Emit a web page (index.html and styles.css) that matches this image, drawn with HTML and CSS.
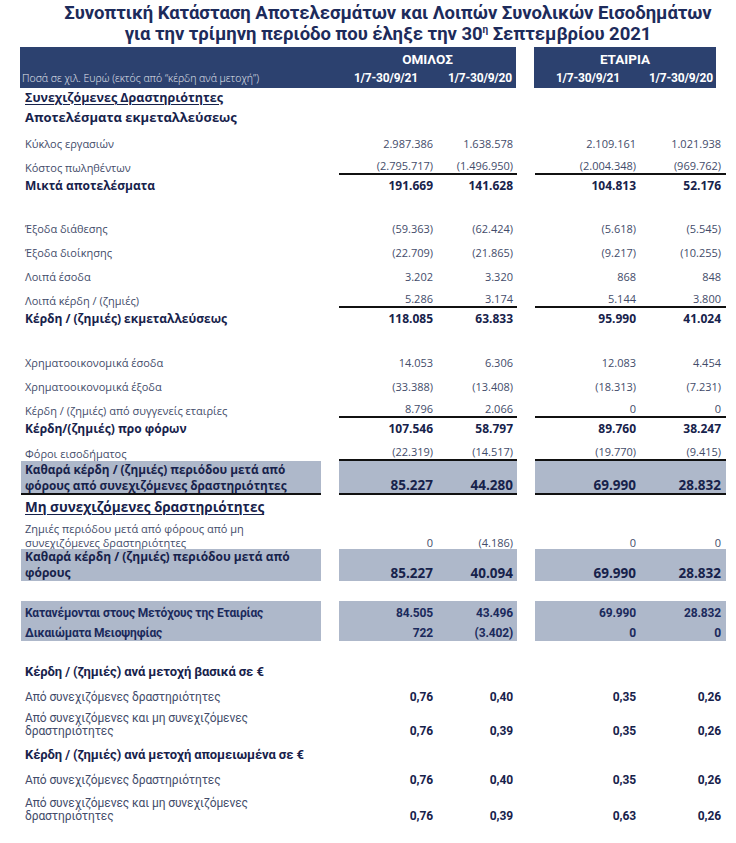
FILE: index.html
```html
<!DOCTYPE html>
<html lang="el">
<head>
<meta charset="utf-8">
<title>Συνοπτική Κατάσταση Αποτελεσμάτων</title>
<link rel="stylesheet" href="styles.css">
</head>
<body>
<div class="page">
  <h1 class="title">Συνοπτική Κατάσταση Αποτελεσμάτων και Λοιπών Συνολικών Εισοδημάτων<br>για την τρίμηνη περιόδο που έληξε την 30<sup>η</sup> Σεπτεμβρίου 2021</h1>

  <div class="head">
    <div class="head-left">
      <div class="grp-name">ΟΜΙΛΟΣ</div>
      <div class="unit">Ποσά σε χιλ. Ευρώ (εκτός από “κέρδη ανά μετοχή”)</div>
      <div class="date d1">1/7-30/9/21</div>
      <div class="date d2">1/7-30/9/20</div>
    </div>
    <div class="head-right">
      <div class="grp-name">ΕΤΑΙΡΙΑ</div>
      <div class="date d1">1/7-30/9/21</div>
      <div class="date d2">1/7-30/9/20</div>
    </div>
  </div>

  <div class="row sec"><div class="lbl"><span class="ul">Συνεχιζόμενες Δραστηριότητες</span></div></div>
  <div class="row sub"><div class="lbl">Αποτελέσματα εκμεταλλεύσεως</div></div>

  <div class="row item"><div class="lbl">Κύκλος εργασιών</div><div class="blk g"><span>2.987.386</span><span>1.638.578</span></div><div class="blk c"><span>2.109.161</span><span>1.021.938</span></div></div>
  <div class="row item line"><div class="lbl">Κόστος πωληθέντων</div><div class="blk g"><span>(2.795.717)</span><span>(1.496.950)</span></div><div class="blk c"><span>(2.004.348)</span><span>(969.762)</span></div></div>
  <div class="row total"><div class="lbl">Μικτά αποτελέσματα</div><div class="blk g"><span>191.669</span><span>141.628</span></div><div class="blk c"><span>104.813</span><span>52.176</span></div></div>

  <div class="spacer s16"></div>
  <div class="row item"><div class="lbl">Έξοδα διάθεσης</div><div class="blk g"><span>(59.363)</span><span>(62.424)</span></div><div class="blk c"><span>(5.618)</span><span>(5.545)</span></div></div>
  <div class="row item"><div class="lbl">Έξοδα διοίκησης</div><div class="blk g"><span>(22.709)</span><span>(21.865)</span></div><div class="blk c"><span>(9.217)</span><span>(10.255)</span></div></div>
  <div class="row item"><div class="lbl">Λοιπά έσοδα</div><div class="blk g"><span>3.202</span><span>3.320</span></div><div class="blk c"><span>868</span><span>848</span></div></div>
  <div class="row item line"><div class="lbl">Λοιπά κέρδη / (ζημιές)</div><div class="blk g"><span>5.286</span><span>3.174</span></div><div class="blk c"><span>5.144</span><span>3.800</span></div></div>
  <div class="row total"><div class="lbl">Κέρδη / (ζημιές) εκμεταλλεύσεως</div><div class="blk g"><span>118.085</span><span>63.833</span></div><div class="blk c"><span>95.990</span><span>41.024</span></div></div>

  <div class="spacer s17"></div>
  <div class="row item"><div class="lbl">Χρηματοοικονομικά έσοδα</div><div class="blk g"><span>14.053</span><span>6.306</span></div><div class="blk c"><span>12.083</span><span>4.454</span></div></div>
  <div class="row item"><div class="lbl">Χρηματοοικονομικά έξοδα</div><div class="blk g"><span>(33.388)</span><span>(13.408)</span></div><div class="blk c"><span>(18.313)</span><span>(7.231)</span></div></div>
  <div class="row item line"><div class="lbl">Κέρδη / (ζημιές) από συγγενείς εταιρίες</div><div class="blk g"><span>8.796</span><span>2.066</span></div><div class="blk c"><span>0</span><span>0</span></div></div>
  <div class="row total"><div class="lbl">Κέρδη/(ζημιές) προ φόρων</div><div class="blk g"><span>107.546</span><span>58.797</span></div><div class="blk c"><span>89.760</span><span>38.247</span></div></div>
  <div class="row item short line"><div class="lbl">Φόροι εισοδήματος</div><div class="blk g"><span>(22.319)</span><span>(14.517)</span></div><div class="blk c"><span>(19.770)</span><span>(9.415)</span></div></div>
  <div class="row shade boxed"><div class="lbl">Καθαρά κέρδη / (ζημιές) περιόδου μετά από<br>φόρους από συνεχιζόμενες δραστηριότητες</div><div class="blk g"><span>85.227</span><span>44.280</span></div><div class="blk c"><span>69.990</span><span>28.832</span></div></div>

  <div class="row sec2"><div class="lbl"><span class="ul">Μη συνεχιζόμενες δραστηριότητες</span></div></div>
  <div class="row item two"><div class="lbl">Ζημιές περιόδου μετά από φόρους από μη<br>συνεχιζόμενες δραστηριότητες</div><div class="blk g"><span>0</span><span>(4.186)</span></div><div class="blk c"><span>0</span><span>0</span></div></div>
  <div class="row shade"><div class="lbl">Καθαρά κέρδη / (ζημιές) περιόδου μετά από<br>φόρους</div><div class="blk g"><span>85.227</span><span>40.094</span></div><div class="blk c"><span>69.990</span><span>28.832</span></div></div>

  <div class="spacer s20"></div>
  <div class="row alloc"><div class="lbl">Κατανέμονται στους Μετόχους της Εταιρίας</div><div class="blk g"><span>84.505</span><span>43.496</span></div><div class="blk c"><span>69.990</span><span>28.832</span></div></div>
  <div class="row alloc"><div class="lbl">Δικαιώματα Μειοψηφίας</div><div class="blk g"><span>722</span><span>(3.402)</span></div><div class="blk c"><span>0</span><span>0</span></div></div>

  <div class="row eps-head first"><div class="lbl">Κέρδη / (ζημιές) ανά μετοχή βασικά σε €</div></div>
  <div class="row eps"><div class="lbl">Από συνεχιζόμενες δραστηριότητες</div><div class="blk g"><span>0,76</span><span>0,40</span></div><div class="blk c"><span>0,35</span><span>0,26</span></div></div>
  <div class="row eps two"><div class="lbl">Από συνεχιζόμενες και μη συνεχιζόμενες<br>δραστηριότητες</div><div class="blk g"><span>0,76</span><span>0,39</span></div><div class="blk c"><span>0,35</span><span>0,26</span></div></div>
  <div class="row eps-head"><div class="lbl">Κέρδη / (ζημιές) ανά μετοχή απομειωμένα σε €</div></div>
  <div class="row eps"><div class="lbl">Από συνεχιζόμενες δραστηριότητες</div><div class="blk g"><span>0,76</span><span>0,40</span></div><div class="blk c"><span>0,35</span><span>0,26</span></div></div>
  <div class="row eps two last"><div class="lbl">Από συνεχιζόμενες και μη συνεχιζόμενες<br>δραστηριότητες</div><div class="blk g"><span>0,76</span><span>0,39</span></div><div class="blk c"><span>0,63</span><span>0,26</span></div></div>
</div>
</body>
</html>
```

FILE: styles.css
```css
html, body {
  margin: 0;
  padding: 0;
  background: #ffffff;
}

body {
  font-family: "Open Sans", "DejaVu Sans", sans-serif;
  color: #434c6a;
}

.page {
  width: 736px;
}

.title {
  margin: 0;
  padding: 3px 0 2px 40px;
  font-family: "Roboto", "Liberation Sans", sans-serif;
  font-weight: 700;
  font-size: 18.5px;
  line-height: 21px;
  color: #1d2b5b;
  text-align: center;
  letter-spacing: -0.05px;
  white-space: nowrap;
}

.title sup {
  font-size: 10px;
  line-height: 0;
  vertical-align: 7px;
}

/* ---------- header bar ---------- */
.head {
  display: flex;
  gap: 18px;
  margin-left: 20px;
  height: 41px;
}

.head-left,
.head-right {
  background: #2c416f;
  color: #ffffff;
  display: grid;
  grid-template-rows: 21px 20px;
  align-items: center;
}

.head-left {
  width: 496px;
  grid-template-columns: 319px 79px 98px;
}

.head-right {
  width: 182px;
  grid-template-columns: 86px 96px;
}

.grp-name {
  font-family: "Roboto", "Liberation Sans", sans-serif;
  font-weight: 700;
  font-size: 13.5px;
  text-align: center;
  padding-top: 3px;
}

.head-left .grp-name {
  grid-column: 2 / 4;
  grid-row: 1;
}

.head-right .grp-name {
  grid-column: 1 / 3;
  grid-row: 1;
}

.unit {
  grid-column: 1;
  grid-row: 2;
  padding-left: 2px;
  font-size: 10.5px;
  font-weight: 300;
  white-space: nowrap;
  color: #e6e9f0;
}

.date {
  grid-row: 2;
  text-align: right;
  font-family: "Roboto", "Liberation Sans", sans-serif;
  font-weight: 700;
  font-size: 12px;
  letter-spacing: -0.2px;
}

.head-left .d1 { grid-column: 2; }
.head-left .d2 { grid-column: 3; padding-right: 4px; }
.head-right .d1 { grid-column: 1; }
.head-right .d2 { grid-column: 2; padding-right: 3px; }

/* ---------- body rows ---------- */
.row {
  display: grid;
  grid-template-columns: 300px 178px 191px;
  column-gap: 18px;
  margin-left: 21px;
  align-items: end;
  font-size: 11px;
  line-height: 14px;
}

.lbl {
  padding-left: 4px;
  white-space: nowrap;
}

.blk {
  display: grid;
  text-align: right;
}

.blk.g { grid-template-columns: 94px 84px; }
.blk.g span:last-child { padding-right: 4px; }
.blk.c { grid-template-columns: 101px 90px; }
.blk.c span:last-child { padding-right: 5px; }

.spacer.s16 { height: 16px; }
.spacer.s17 { height: 17px; }
.spacer.s20 { height: 20px; }

.sec,
.sub,
.sec2,
.total,
.shade,
.eps-head {
  font-weight: 700;
  color: #17224b;
}

.sec {
  height: 19px;
  align-items: center;
  font-size: 12.5px;
  line-height: 16px;
}

.sub {
  height: 20px;
  align-items: center;
  font-size: 13px;
  line-height: 16px;
}

.ul {
  text-decoration: underline;
  text-decoration-thickness: 1px;
  text-underline-offset: 2px;
}

.sec2 {
  height: 24px;
  align-items: center;
  font-size: 13.5px;
  line-height: 18px;
}

.item {
  height: 24px;
}

.item.short {
  height: 22px;
}

.item.two {
  height: 30px;
  line-height: 13.5px;
}

.line .blk {
  border-bottom: 2px solid #111111;
}

.total {
  height: 21px;
  align-items: center;
  font-size: 12px;
}

.shade {
  height: 32px;
  font-size: 12px;
  line-height: 16px;
}

.shade .lbl,
.shade .blk {
  background: #aeb8ca;
  height: 100%;
  box-sizing: border-box;
}

.shade .blk {
  align-items: end;
  font-size: 13.5px;
}

.shade.boxed {
  height: 34px;
}

.shade.boxed .lbl {
  font-size: 11.8px;
  line-height: 16px;
  border-bottom: 2px solid #111111;
}

.shade.boxed .blk {
  border-bottom: 2px solid #111111;
}

/* allocation block */
.alloc {
  height: 20px;
  font-family: "Roboto", "Liberation Sans", sans-serif;
  font-weight: 700;
  font-size: 12px;
  line-height: 16px;
  letter-spacing: -0.15px;
  color: #1b2a5c;
}

.alloc .lbl,
.alloc .blk {
  background: #aeb8ca;
  height: 100%;
  box-sizing: border-box;
  align-items: end;
}

.alloc .lbl { padding-top: 4px; }

/* EPS section */
.eps-head {
  height: 25px;
  font-family: "Roboto", "Liberation Sans", sans-serif;
  font-size: 13px;
  line-height: 16px;
  letter-spacing: -0.1px;
}

.eps-head.first { height: 39px; }

.eps {
  height: 25px;
  line-height: 16px;
  font-family: "Roboto", "Liberation Sans", sans-serif;
  font-size: 12px;
  letter-spacing: -0.1px;
}

.eps .blk {
  font-weight: 700;
  color: #17224b;
}

.eps.two {
  height: 33px;
  line-height: 13px;
}

.eps.two.last {
  height: 35px;
}
```
